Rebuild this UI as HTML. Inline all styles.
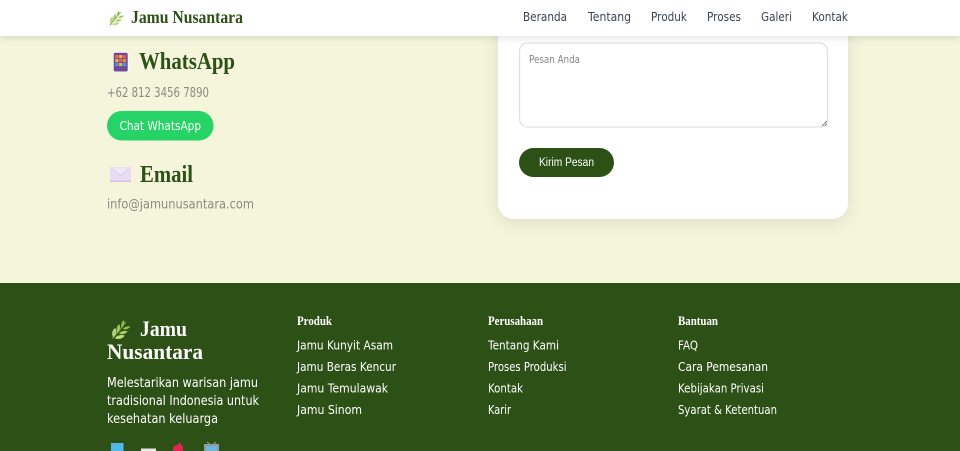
<!DOCTYPE html>
<html lang="id"><head><meta charset="utf-8"><title>Jamu Nusantara</title>
<style>
html,body{margin:0;padding:0;width:960px;height:451px;overflow:hidden;background:#f5f5dc}
svg{display:block}
.s{font-family:"DejaVu Sans",sans-serif}
.a{font-family:"Liberation Sans",sans-serif}
.p{font-family:"Liberation Serif",serif;font-weight:700}
.f{fill:#fff;font-size:12.3px;font-family:"DejaVu Sans",sans-serif}
.t{fill:#fff;font-size:13.2px;font-family:"DejaVu Sans",sans-serif}
.n{fill:#3a4450;font-size:12.6px;font-family:"DejaVu Sans",sans-serif}
.g{fill:#8a8a84;font-size:13.2px;font-family:"DejaVu Sans",sans-serif}
.h{fill:#fff;font-size:12.4px;font-family:"Liberation Serif",serif;font-weight:700}
</style></head><body>
<svg width="960" height="451" viewBox="0 0 960 451" xmlns="http://www.w3.org/2000/svg">
<defs>
<filter id="sh" x="-20%" y="-20%" width="140%" height="140%"><feDropShadow dx="0" dy="4" stdDeviation="8" flood-color="#000" flood-opacity=".09"/></filter>
<filter id="nsh" x="-5%" y="-50%" width="110%" height="220%"><feDropShadow dx="0" dy="2" stdDeviation="4" flood-color="#000" flood-opacity=".11"/></filter>
<g id="leaf">
<path d="M1 15C4.500 11.500 8 7 11.500 2" stroke="#7d9a58" stroke-width=".9" fill="none"/>
<path d="M1.600 14C.2 11.500.8 8.600 3.200 6.800 4.800 9.400 4.300 12 1.600 14Z" fill="#b4d67a"/>
<path d="M4.800 10.800C3.800 8.200 4.300 5.600 6.300 3.800 7.600 6.300 7.200 8.800 4.800 10.800Z" fill="#9cc65a"/>
<path d="M8 7C7.500 5 8 2.800 9.600.8 10.600 3 10.200 5.200 8 7Z" fill="#8fbf4c"/>
<path d="M2.800 14.800C4.800 12.400 7.800 11.800 10.600 12.800 8.800 15.200 5.600 16 2.800 14.800Z" fill="#bfe07e"/>
<path d="M6 11.200C7.800 9.200 10.400 8.700 12.800 9.500 11.200 11.700 8.400 12.300 6 11.200Z" fill="#a8d060"/>
<path d="M9.200 7.600C10.500 5.900 12.500 5.300 14.800 5.800 13.500 7.800 11.300 8.500 9.200 7.600Z" fill="#98c850"/>
</g>
</defs>

<rect width="960" height="451" fill="#f5f5dc"/>

<!-- contact card -->
<rect x="498" y="-40" width="350" height="259" rx="16" fill="#fff" filter="url(#sh)"/>
<rect x="519.500" y="43" width="308" height="84" rx="8" fill="#fff" stroke="#e2e2e2" stroke-width="1.300"/>
<text x="529" y="63" textLength="51" lengthAdjust="spacingAndGlyphs" class="s" font-size="10.200" fill="#858585">Pesan Anda</text>
<path d="M822 126l5-5M825 126l2-2" stroke="#666" stroke-width=".8"/>
<rect x="519" y="148" width="95" height="29" rx="14.500" fill="#2d5016"/>
<text x="539" y="166" textLength="55" lengthAdjust="spacingAndGlyphs" class="a" font-size="11.500" fill="#fff">Kirim Pesan</text>

<!-- nav -->
<rect width="960" height="36" fill="#fff" filter="url(#nsh)"/>
<use href="#leaf" x="109" y="10"/>
<text x="131" y="23" textLength="112" lengthAdjust="spacingAndGlyphs" class="p" font-size="17.600" fill="#2d5016">Jamu Nusantara</text>
<text x="523" y="21" textLength="44" lengthAdjust="spacingAndGlyphs" class="n">Beranda</text>
<text x="588" y="21" textLength="43" lengthAdjust="spacingAndGlyphs" class="n">Tentang</text>
<text x="651" y="21" textLength="36" lengthAdjust="spacingAndGlyphs" class="n">Produk</text>
<text x="707" y="21" textLength="34" lengthAdjust="spacingAndGlyphs" class="n">Proses</text>
<text x="761" y="21" textLength="31" lengthAdjust="spacingAndGlyphs" class="n">Galeri</text>
<text x="812" y="21" textLength="36" lengthAdjust="spacingAndGlyphs" class="n">Kontak</text>

<!-- left column -->
<rect x="113" y="52" width="15.500" height="20" rx="2" fill="#fff"/>
<rect x="113.700" y="52.700" width="14" height="18.800" rx="1.500" fill="#6d4a96"/>
<g>
<rect x="115.300" y="55" width="3.200" height="3.200" fill="#e8743b"/><rect x="119.100" y="55" width="3.200" height="3.200" fill="#f2b33d"/><rect x="122.900" y="55" width="3.200" height="3.200" fill="#e05a6d"/>
<rect x="115.300" y="59" width="3.200" height="3.200" fill="#f2b33d"/><rect x="119.100" y="59" width="3.200" height="3.200" fill="#e05a6d"/><rect x="122.900" y="59" width="3.200" height="3.200" fill="#f08a3c"/>
<rect x="115.300" y="63" width="3.200" height="3.200" fill="#3f9be0"/><rect x="119.100" y="63" width="3.200" height="3.200" fill="#f2b33d"/><rect x="122.900" y="63" width="3.200" height="3.200" fill="#3f9be0"/>
</g>
<text x="139" y="69" textLength="96" lengthAdjust="spacingAndGlyphs" class="p" font-size="24" fill="#2d5016">WhatsApp</text>
<text x="107" y="97" textLength="102" lengthAdjust="spacingAndGlyphs" class="g">+62 812 3456 7890</text>
<rect x="107" y="111" width="106.500" height="29.500" rx="14.700" fill="#25d366"/>
<text x="119.500" y="130" textLength="81.500" lengthAdjust="spacingAndGlyphs" class="s" font-size="12" fill="#fff">Chat WhatsApp</text>

<rect x="110" y="167" width="21" height="15" rx="1" fill="#e9dcf3"/>
<path d="M110.500 167.500l10 8 10-8" fill="#f0e7f7" stroke="#d8c8e6" stroke-width=".8"/>
<rect x="110" y="180.600" width="21" height="1.400" fill="#d4bfe6"/>
<text x="140" y="182" textLength="53" lengthAdjust="spacingAndGlyphs" class="p" font-size="24" fill="#2d5016">Email</text>
<text x="107" y="208.500" textLength="147" lengthAdjust="spacingAndGlyphs" class="g">info@jamunusantara.com</text>

<!-- footer -->
<rect y="283" width="960" height="168" fill="#2d5016"/>
<use href="#leaf" transform="translate(111 319) scale(1.300)"/>
<text x="140" y="336" textLength="47" lengthAdjust="spacingAndGlyphs" class="p" font-size="22.400" fill="#fff">Jamu</text>
<text x="107" y="359" textLength="96" lengthAdjust="spacingAndGlyphs" class="p" font-size="22.400" fill="#fff">Nusantara</text>
<text x="107" y="387" textLength="151" lengthAdjust="spacingAndGlyphs" class="t">Melestarikan warisan jamu</text>
<text x="107" y="405" textLength="152" lengthAdjust="spacingAndGlyphs" class="t">tradisional Indonesia untuk</text>
<text x="107" y="423" textLength="111" lengthAdjust="spacingAndGlyphs" class="t">kesehatan keluarga</text>

<rect x="111" y="443" width="12.500" height="8" fill="#4fb8e8"/>
<rect x="141" y="448.500" width="15" height="2.500" fill="#e8e8e8"/>
<path d="M173 448c1-2.500 3-3 5-3l1-2h2v2l2 1v5h-10Z" fill="#e0254f"/>
<path d="M207 442l2.500 2M216 442l-2.500 2" stroke="#9aa5ad" stroke-width="1"/>
<rect x="204" y="444" width="15" height="7" fill="#8f9ba3"/>
<rect x="206" y="446" width="11" height="5" fill="#6fb6dc"/>

<text x="297" y="325" textLength="35" lengthAdjust="spacingAndGlyphs" class="h">Produk</text>
<text x="488" y="325" textLength="55" lengthAdjust="spacingAndGlyphs" class="h">Perusahaan</text>
<text x="678" y="325" textLength="40" lengthAdjust="spacingAndGlyphs" class="h">Bantuan</text>

<text x="297" y="349.500" textLength="96" lengthAdjust="spacingAndGlyphs" class="f">Jamu Kunyit Asam</text>
<text x="297" y="371" textLength="99" lengthAdjust="spacingAndGlyphs" class="f">Jamu Beras Kencur</text>
<text x="297" y="392.500" textLength="91" lengthAdjust="spacingAndGlyphs" class="f">Jamu Temulawak</text>
<text x="297" y="414" textLength="65" lengthAdjust="spacingAndGlyphs" class="f">Jamu Sinom</text>

<text x="488" y="349.500" textLength="71" lengthAdjust="spacingAndGlyphs" class="f">Tentang Kami</text>
<text x="488" y="371" textLength="78.500" lengthAdjust="spacingAndGlyphs" class="f">Proses Produksi</text>
<text x="488" y="392.500" textLength="35" lengthAdjust="spacingAndGlyphs" class="f">Kontak</text>
<text x="488" y="414" textLength="23" lengthAdjust="spacingAndGlyphs" class="f">Karir</text>

<text x="678" y="349.500" textLength="20" lengthAdjust="spacingAndGlyphs" class="f">FAQ</text>
<text x="678" y="371" textLength="90" lengthAdjust="spacingAndGlyphs" class="f">Cara Pemesanan</text>
<text x="678" y="392.500" textLength="86" lengthAdjust="spacingAndGlyphs" class="f">Kebijakan Privasi</text>
<text x="678" y="414" textLength="99" lengthAdjust="spacingAndGlyphs" class="f">Syarat &amp; Ketentuan</text>
</svg>
</body></html>
